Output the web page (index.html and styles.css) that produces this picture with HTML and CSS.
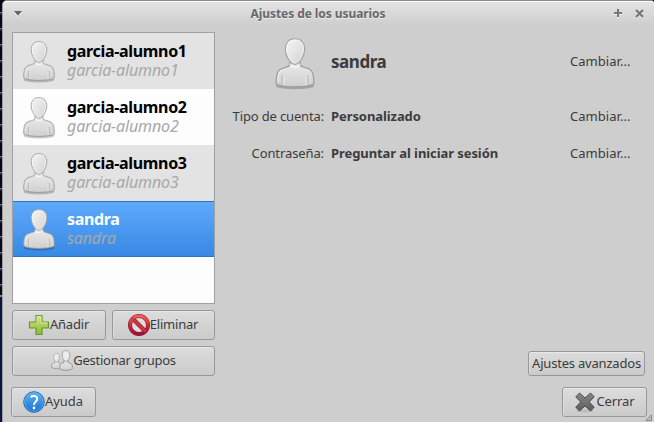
FILE: index.html
```html
<!DOCTYPE html>
<html lang="es">
<head>
<meta charset="utf-8">
<title>Ajustes de los usuarios</title>
<link rel="stylesheet" href="styles.css">
</head>
<body>
<svg class="defs" width="0" height="0" aria-hidden="true">
  <defs>
    <linearGradient id="skin" x1="0" y1="0" x2="1" y2="1"><stop offset="0" stop-color="#f6f6f6"/><stop offset=".55" stop-color="#e2e2e2"/><stop offset="1" stop-color="#d2d2d2"/></linearGradient>
    <linearGradient id="shirt" x1="0" y1="0" x2="0" y2="1"><stop offset="0" stop-color="#ececec"/><stop offset="1" stop-color="#cfcfcf"/></linearGradient>
    <linearGradient id="green" x1="0" y1="0" x2="0" y2="1"><stop offset="0" stop-color="#d3e58a"/><stop offset="1" stop-color="#8db92d"/></linearGradient>
    <linearGradient id="red" x1="0" y1="0" x2="0" y2="1"><stop offset="0" stop-color="#ee6257"/><stop offset=".5" stop-color="#d02a35"/><stop offset="1" stop-color="#9c1238"/></linearGradient>
    <linearGradient id="blue" x1="0" y1="0" x2="0" y2="1"><stop offset="0" stop-color="#58b4f2"/><stop offset="1" stop-color="#1f6fd4"/></linearGradient>
    <linearGradient id="dark" x1="0" y1="0" x2="0" y2="1"><stop offset="0" stop-color="#858885"/><stop offset="1" stop-color="#5b5e5c"/></linearGradient>
    <symbol id="person" viewBox="0 0 32 42">
      <ellipse cx="16" cy="38.800" rx="15.500" ry="2.600" fill="#000" opacity=".2"/>
      <path d="M.7 36.800C.7 31 1.200 27 4 25.300C6.500 23.800 10.500 23.500 12 22V19H20V22C21.500 23.500 25.500 23.800 28 25.300C30.800 27 31.300 31 31.300 36.800C28 40.300 4 40.300.7 36.800Z" fill="url(#shirt)" stroke="#999" stroke-width=".9"/>
      <path d="M12 21.500C12.800 24.300 19.200 24.300 20 21.500" fill="none" stroke="#f8f8f8" stroke-width="1"/>
      <path d="M5.700 30V37.500M26.300 30V37.500" stroke="#bbb" stroke-width="1"/>
      <path d="M2.200 35.500C2.200 30 3 27.500 5 26.500M7 31V38M25 31V38" fill="none" stroke="#fff" stroke-width=".7" opacity=".6"/>
      <path d="M16 .6C21.300 .6 23.800 4.300 23.800 9C23.800 14.500 19.500 21.300 16 21.300S8.200 14.500 8.200 9C8.200 4.300 10.700 .6 16 .6Z" fill="url(#skin)" stroke="#a2a2a2" stroke-width=".9"/>
      <path d="M16 1.700C20.500 1.700 22.700 5 22.700 9C22.700 14 18.700 20.200 16 20.200S9.300 14 9.300 9C9.300 5 11.500 1.700 16 1.700Z" fill="none" stroke="#fff" stroke-width=".7" opacity=".6"/>
    </symbol>
    <symbol id="bust" viewBox="0 0 14 22">
      <path d="M.6 18.500C.6 14.500 1.500 13.300 5 12.500V10H9V12.500C12.500 13.300 13.400 14.500 13.400 18.500C11 21 3 21 .6 18.500Z" fill="url(#shirt)" stroke="#909090" stroke-width=".9"/>
      <path d="M7 .6C9.600 .6 10.800 2.500 10.800 5C10.800 8 8.700 11.300 7 11.300S3.200 8 3.200 5C3.200 2.500 4.400 .6 7 .6Z" fill="#ececec" stroke="#989898" stroke-width=".8"/>
    </symbol>
  </defs>
</svg>
<div class="window">
  <header class="titlebar">
    <svg class="tb-menu" width="8" height="6"><path d="M0 1.500H8L4 6Z" fill="#f4f4f4"/><path d="M0 0H8L4 4.700Z" fill="#666"/></svg>
    <h1 class="title">Ajustes de los usuarios</h1>
    <svg class="tb-max" width="8" height="9"><path d="M4 1V9M0 5H8" stroke="#f3f3f3" stroke-width="2"/><path d="M4 0V8M0 4H8" stroke="#777" stroke-width="2"/></svg>
    <svg class="tb-close" width="9" height="9"><path d="M1 2L8 9M8 2L1 9" stroke="#f3f3f3" stroke-width="2"/><path d="M1 1L8 8M8 1L1 8" stroke="#777" stroke-width="2.200"/></svg>
  </header>
  <main class="content">
    <section class="sidebar">
      <ul class="users">
        <li class="user odd"><svg class="avatar"><use href="#person"/></svg><div><b class="name">garcia-alumno1</b><i class="login">garcia-alumno1</i></div></li>
        <li class="user"><svg class="avatar"><use href="#person"/></svg><div><b class="name">garcia-alumno2</b><i class="login">garcia-alumno2</i></div></li>
        <li class="user odd"><svg class="avatar"><use href="#person"/></svg><div><b class="name">garcia-alumno3</b><i class="login">garcia-alumno3</i></div></li>
        <li class="user selected"><svg class="avatar"><use href="#person"/></svg><div><b class="name">sandra</b><i class="login">sandra</i></div></li>
      </ul>
      <div class="row">
        <button class="btn add"><svg width="22" height="22" viewBox="0 0 22 22"><path d="M8 1.500H14V8H20.500V14H14V20.500H8V14H1.500V8H8Z" fill="url(#green)" stroke="#67962b" stroke-width="1.200" stroke-linejoin="round"/><path d="M9 8.900V2.600H13V8.900H19.400" fill="none" stroke="#eef5c4" stroke-width=".9" opacity=".8"/></svg><span>Añadir</span></button>
        <button class="btn remove"><svg width="22" height="22" viewBox="0 0 22 22"><circle cx="11" cy="11" r="9" fill="#dedede"/><circle cx="11" cy="11" r="9" fill="none" stroke="#96182f" stroke-width="4"/><path d="M5 5L17 17" stroke="#96182f" stroke-width="4.200"/><circle cx="11" cy="11" r="9" fill="none" stroke="url(#red)" stroke-width="2.900"/><path d="M4.500 4.500L17.500 17.500" stroke="#cf353c" stroke-width="2.900"/></svg><span>Eliminar</span></button>
      </div>
      <button class="btn groups"><svg width="22" height="22" viewBox="0 0 22 22"><use href="#bust" x="0" y="3" width="11" height="17"/><use href="#bust" x="8" y="0" width="14" height="22"/></svg><span>Gestionar grupos</span></button>
    </section>
    <section class="details">
      <svg class="portrait"><use href="#person"/></svg>
      <strong class="username">sandra</strong>
      <span class="change first">Cambiar...</span>
      <span class="label kind">Tipo de cuenta:</span>
      <strong class="value">Personalizado</strong>
      <span class="change">Cambiar...</span>
      <span class="label pass">Contraseña:</span>
      <strong class="value">Preguntar al iniciar sesión</strong>
      <span class="change">Cambiar...</span>
      <button class="btn advanced"><span>Ajustes avanzados</span></button>
    </section>
  </main>
  <footer class="footer">
    <button class="btn help"><svg width="22" height="22" viewBox="0 0 22 22"><circle cx="11" cy="11" r="10.300" fill="url(#blue)" stroke="#2569b4"/><circle cx="11" cy="11" r="9.300" fill="none" stroke="#7cc5fa" stroke-width=".7" opacity=".7"/><path d="M7.600 6.200C9.500 4.500 14.200 4.400 14.200 8C14.200 10.500 11 10.900 11 14" fill="none" stroke="#fff" stroke-width="2"/><circle cx="11" cy="17" r="1.400" fill="#fff"/></svg><span>Ayuda</span></button>
    <button class="btn close"><svg width="22" height="22" viewBox="0 0 22 22"><ellipse cx="11" cy="20" rx="9" ry="1.500" fill="#aaa" opacity=".5"/><path d="M5.500 2L11 7L16.500 2L20.200 5.800L15.300 11L20.200 16.200L16.500 20L11 15L5.500 20L1.800 16.200L6.700 11L1.800 5.800Z" fill="url(#dark)" stroke="#4b4e4c" stroke-linejoin="round"/></svg><span>Cerrar</span></button>
  </footer>
  <svg class="grip" width="7" height="7"><path d="M6.500 .8V6.500H.8Z" fill="#bbb" stroke="#8b8b8b"/></svg>
</div>
</body>
</html>
```
FILE: styles.css
```css
* { box-sizing: border-box; }
body {
  margin: 0;
  width: 654px;
  height: 422px;
  overflow: hidden;
  padding-left: 2px;
  background:
    linear-gradient(transparent 295px, #8a8a8a 295px 297px, #06193a 297px),
    repeating-linear-gradient(#050814 0 12px, #7c7c7c 12px 13px, #1c2b4c 13px 15px, #050814 15px 16px);
  font: 13px/18px "Noto Sans", "Open Sans", sans-serif;
  color: #3c3c3c;
}
.defs { position: absolute; }
.window {
  position: relative;
  height: 422px;
  display: flex;
  flex-direction: column;
  background: #cecece;
  border-top: 1px solid #8d8a8d;
  border-left: 1px solid #a0a0a0;
  border-radius: 5px 3px 0 0;
}
.titlebar {
  height: 24px;
  flex: none;
  display: flex;
  align-items: center;
  padding: 0 10px 0 11px;
  border-top: 1px solid #fff;
  border-radius: 4px 3px 0 0;
  background: linear-gradient(#e4e4e4, #cecece);
}
.title {
  flex: 1;
  margin: 0;
  text-align: center;
  font: bold 12px/18px "Noto Sans", sans-serif;
  letter-spacing: -0.07px;
  color: #686868;
  text-shadow: 0 1px #eee;
}
.tb-max { margin-right: 13px; }
.content {
  height: 352px;
  display: flex;
  padding: 7px 6px 0 9px;
}
.sidebar { width: 203px; flex: none; }
.users {
  list-style: none;
  margin: 0 0 6px;
  padding: 0;
  height: 272px;
  border: 1px solid #a0a0a0;
  background: #fdfdfd;
}
.user {
  height: 56px;
  display: flex;
  align-items: center;
  padding-left: 10px;
}
.odd { background: #e3e3e3; }
.user div { margin-left: 12px; }
.avatar { width: 32px; height: 42px; margin-top: 2px; }
.name, .login { display: block; font-size: 16px; line-height: 19px; }
.name { color: #000; letter-spacing: -0.32px; }
.login { color: #a8a8a8; letter-spacing: -0.13px; }
.selected {
  background: linear-gradient(#5ea9fc, #3889e4);
  border-top: 1px solid #2f72bd;
  border-bottom: 1px solid #2f72bd;
}
.selected .name { color: #fff; }
.row { display: flex; gap: 6px; margin-bottom: 6px; }
.btn {
  height: 30px;
  padding: 0;
  display: flex;
  align-items: center;
  justify-content: center;
  font: inherit;
  color: #3c3c3c;
  border: 1px solid #989898;
  border-radius: 3px;
  background: linear-gradient(#dcdcdc, #cbcbcb);
  box-shadow: inset 0 1px #e8e8e8, inset 1px 0 #dedede;
}
.btn svg { flex: none; }
.btn span { padding-bottom: 2px; }
.add { width: 94px; letter-spacing: -0.2px; padding-right: 1px; }
.remove { width: 103px; letter-spacing: -0.2px; padding-right: 1px; }
.groups { width: 203px; letter-spacing: -0.25px; }
.details {
  flex: 1;
  display: grid;
  grid-template-columns: 109px 1fr 78px;
  grid-template-rows: 62px 37px 37px 1fr;
  column-gap: 7px;
  align-items: center;
  padding-top: 3px;
}
.portrait { width: 40px; height: 52px; justify-self: end; margin: -5px 9px 0 0; }
.username { font-size: 17px; letter-spacing: -0.45px; margin-top: -8px; }
.label { justify-self: end; }
.kind { letter-spacing: -0.15px; }
.pass { letter-spacing: -0.1px; }
.value { letter-spacing: -0.08px; }
.change { letter-spacing: 0.05px; }
.first { margin-top: -10px; }
.advanced {
  grid-column: 1 / -1;
  justify-self: end;
  align-self: end;
  width: 117px;
  height: 25px;
  margin: 0 3px 1px 0;
  letter-spacing: -0.2px;
}
.footer {
  display: flex;
  justify-content: space-between;
  padding: 10px 7px 0 8px;
}
.help, .close { width: 85px; letter-spacing: -0.1px; padding-right: 1px; }
.close { padding-right: 0; }
.grip { position: absolute; right: 2px; bottom: 1px; }
```
